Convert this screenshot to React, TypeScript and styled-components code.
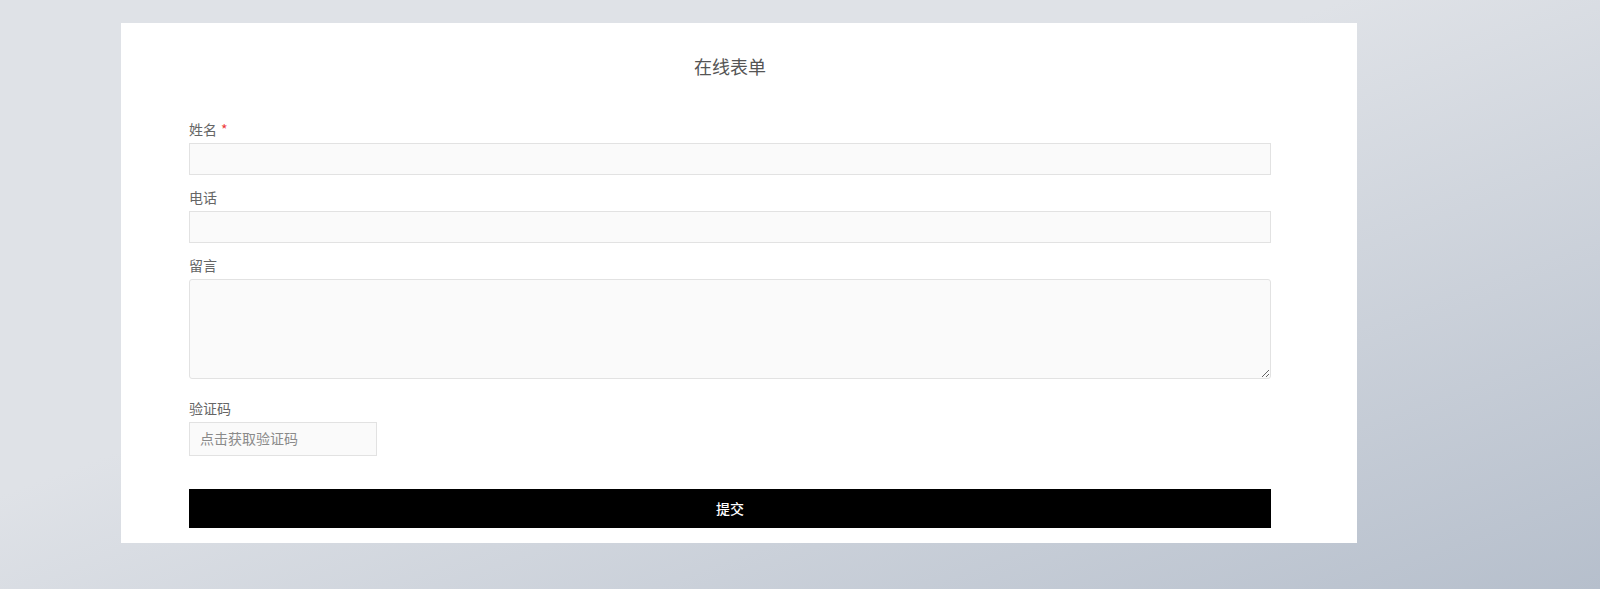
import React from 'react';
import styled, { createGlobalStyle } from 'styled-components';

const GlobalStyle = createGlobalStyle`
  html, body {
    margin: 0;
    padding: 0;
  }
  body {
    min-height: 589px;
    font-family: "Noto Sans CJK SC", "Noto Sans", sans-serif;
    background: linear-gradient(to bottom right, #dfe2e7 42%, #b6bfcc 100%);
    background-attachment: fixed;
  }
  * {
    box-sizing: border-box;
  }
`;

const Page = styled.div`
  padding: 23px 0 0 121px;
`;

const Card = styled.form`
  width: 1236px;
  background: #ffffff;
  padding: 31px 86px 15px 68px;
  display: flex;
  flex-direction: column;
`;

const Title = styled.h2`
  margin: 0 0 42px;
  font-size: 18px;
  line-height: 24px;
  font-weight: 400;
  color: #555;
  text-align: center;
`;

const Field = styled.div<{ $gap?: number }>`
  display: flex;
  flex-direction: column;
  margin-bottom: ${(p) => p.$gap ?? 13}px;
`;

const Label = styled.label`
  font-size: 14px;
  line-height: 18px;
  padding-bottom: 2px;
  color: #666;
  margin-bottom: 3px;
`;

const Star = styled.span`
  color: #ee3b3b;
  margin-left: 4px;
`;

const TextInput = styled.input`
  display: block;
  width: 100%;
  height: 32px;
  margin: 0;
  padding: 0 10px;
  background: #fafafa;
  border: 1px solid #e2e2e2;
  border-radius: 0;
  outline: none;
  font-family: inherit;
  font-size: 14px;
  color: #333;
`;

const TextArea = styled.textarea`
  display: block;
  width: 100%;
  height: 100px;
  margin: 0;
  padding: 6px 10px;
  background: #fafafa;
  border: 1px solid #e2e2e2;
  border-radius: 3px;
  outline: none;
  font-family: inherit;
  font-size: 14px;
  color: #333;
  resize: vertical;
`;

const CaptchaInput = styled(TextInput)`
  width: 188px;
  height: 34px;
  padding-bottom: 2px;
  cursor: pointer;

  &::placeholder {
    color: #8a8a8a;
  }
`;

const SubmitButton = styled.button`
  display: block;
  width: 100%;
  height: 39px;
  margin: 0;
  padding: 0 0 2px;
  border: none;
  border-radius: 0;
  background: #000;
  color: #fff;
  font-family: inherit;
  font-size: 14px;
  font-weight: 500;
  cursor: pointer;
`;

const App: React.FC = () => {
  return (
    <>
      <GlobalStyle />
      <Page>
        <Card onSubmit={(e) => e.preventDefault()}>
          <Title>在线表单</Title>
          <Field>
            <Label>
              姓名<Star>*</Star>
            </Label>
            <TextInput type="text" />
          </Field>
          <Field>
            <Label>电话</Label>
            <TextInput type="tel" />
          </Field>
          <Field $gap={20}>
            <Label>留言</Label>
            <TextArea />
          </Field>
          <Field $gap={33}>
            <Label>验证码</Label>
            <CaptchaInput type="text" placeholder="点击获取验证码" readOnly />
          </Field>
          <SubmitButton type="submit">提交</SubmitButton>
        </Card>
      </Page>
    </>
  );
};

export default App;
